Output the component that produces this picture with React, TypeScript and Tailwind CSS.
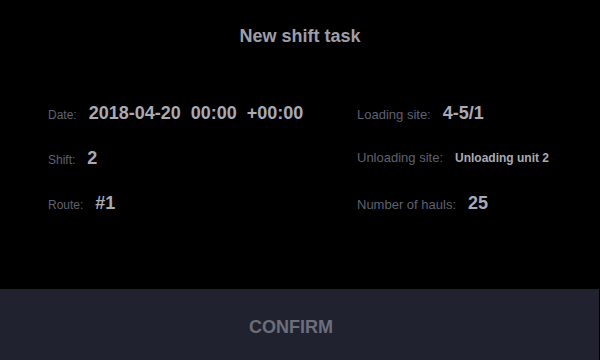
const leftRows = [
  {label: 'Date:', value: '2018-04-20  00:00  +00:00', big: true},
  {label: 'Shift:', value: '2', big: true},
  {label: 'Route:', value: '#1', big: true},
]

const rightRows = [
  {label: 'Loading site:', value: '4-5/1', big: true},
  {label: 'Unloading site:', value: 'Unloading unit 2', big: false},
  {label: 'Number of hauls:', value: '25', big: true},
]

function Field({label, value, big, wide}: {label: string; value: string; big: boolean; wide?: boolean}) {
  return (
    <div className="flex h-6 items-baseline">
      <span className={`leading-6 text-[#5f6170] ${wide ? 'text-[13px]' : 'text-[12px]'}`}>{label}</span>
      <span
        className={`ml-3 whitespace-pre font-bold text-[#a9aab4] ${
          big ? 'text-[18px] leading-6' : 'text-[12px] leading-6'
        }`}
      >
        {value}
      </span>
    </div>
  )
}

export default function App() {
  return (
    <div
      className="flex h-[360px] w-[600px] flex-col bg-black"
      style={{fontFamily: '"Liberation Sans", Arial, sans-serif'}}
    >
      <header className="flex justify-center pt-6">
        <h1 className="text-[18px] font-bold leading-6 text-[#9d9ea8]">New shift task</h1>
      </header>

      <main className="mt-[53px] grid grid-cols-[309px_1fr] pl-12">
        <div className="flex flex-col gap-[21px]">
          {leftRows.map((r) => (
            <Field key={r.label} {...r} />
          ))}
        </div>
        <div className="flex flex-col gap-[21px]">
          {rightRows.map((r) => (
            <Field key={r.label} {...r} wide />
          ))}
        </div>
      </main>

      <div className="mt-auto mr-px flex h-[71px] items-center justify-center bg-[#20232f] pt-[5px] pr-[17px]">
        <span className="text-[18px] font-bold leading-6 text-[#6c6e7b]">CONFIRM</span>
      </div>
    </div>
  )
}
